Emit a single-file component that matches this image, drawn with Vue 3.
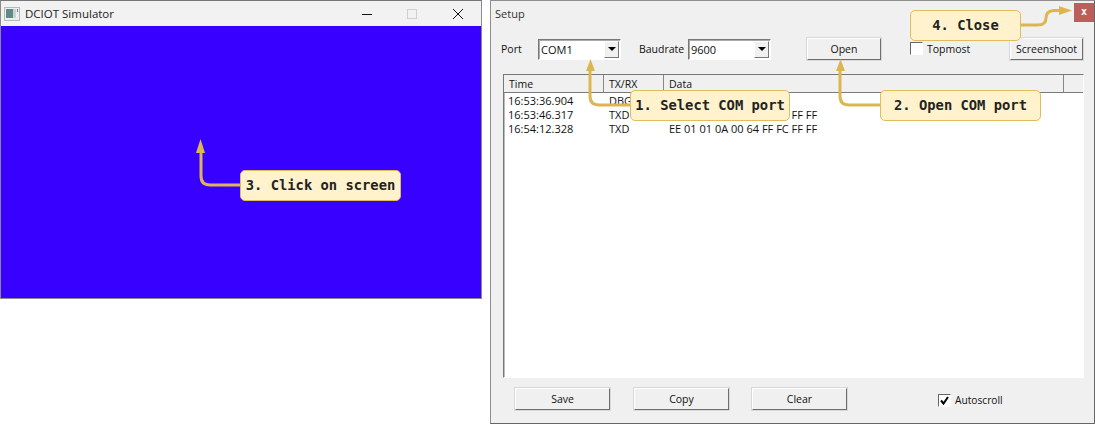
<script setup>
const rows = [
  { t: '16:53:36.904', k: 'DBG', d: '' },
  { t: '16:53:46.317', k: 'TXD', d: 'EE 01 01 0A 00 64 FF FC FF FF' },
  { t: '16:54:12.328', k: 'TXD', d: 'EE 01 01 0A 00 64 FF FC FF FF' }
]
</script>

<template>
  <div class="page">
    <section class="sim">
      <header class="sim-title">
        <svg class="app-icon" width="16" height="14" viewBox="0 0 16 14">
          <rect x="0.5" y="0.5" width="15" height="13" fill="#eef0f0" stroke="#b5b8b8" />
          <rect x="2" y="2" width="7" height="9" fill="#5f8a86" />
          <rect x="9" y="2" width="3" height="9" fill="#c9d3d3" />
          <rect x="13" y="2" width="1" height="3" fill="#6f7f80" />
        </svg>
        <span class="sim-name">DCIOT Simulator</span>
        <svg class="ctl min" width="10" height="10" viewBox="0 0 10 10"><path d="M0 5.5H10" stroke="#111" /></svg>
        <svg class="ctl max" width="10" height="10" viewBox="0 0 10 10"><rect x="0.5" y="0.5" width="9" height="9" fill="none" stroke="#cfcfcf" /></svg>
        <svg class="ctl cls" width="10" height="10" viewBox="0 0 10 10"><path d="M0 0L10 10M10 0L0 10" stroke="#111" /></svg>
      </header>
      <div class="screen"></div>
    </section>

    <section class="setup">
      <header class="setup-title">Setup</header>
      <div class="toolbar">
        <span class="lbl port-lbl">Port</span>
        <div class="combo com"><span>COM1</span><i class="drop"></i></div>
        <span class="lbl baud-lbl">Baudrate</span>
        <div class="combo baud"><span>9600</span><i class="drop"></i></div>
        <button class="btn open">Open</button>
        <label class="check top"><i class="box"></i>Topmost</label>
        <button class="btn shot">Screenshoot</button>
      </div>
      <div class="list">
        <div class="list-head">
          <span class="h h1">Time</span>
          <span class="h h2">TX/RX</span>
          <span class="h h3">Data</span>
          <span class="h h4"></span>
        </div>
        <div class="rows">
          <div v-for="r in rows" :key="r.t" class="row">
            <span class="c1">{{ r.t }}</span><span class="c2">{{ r.k }}</span><span class="c3">{{ r.d }}</span>
          </div>
        </div>
      </div>
      <div class="footer">
        <button class="btn foot">Save</button>
        <button class="btn foot copy">Copy</button>
        <button class="btn foot clear">Clear</button>
        <label class="check auto">
          <i class="box"><svg width="11" height="11" viewBox="0 0 11 11"><path d="M2 5.5L4.5 8.5L9 2" fill="none" stroke="#000" stroke-width="2" /></svg></i>Autoscroll
        </label>
      </div>
      <div class="x">x</div>
    </section>

    <svg class="arrows" width="1095" height="424" viewBox="0 0 1095 424">
      <g fill="none" stroke="#dcb751" stroke-width="3">
        <path d="M590 66V96Q590 105 599 105H640" />
        <path d="M840 66V96Q840 105 849 105H885" />
        <path d="M201 150V176Q201 185 210 185H245" />
        <path d="M1018 25H1038Q1046 25 1046 18Q1046 11 1054 10.5H1064" />
      </g>
      <g fill="#dcb751">
        <path d="M590.500 59L595 71H586Z" />
        <path d="M840.500 59L845 71H836Z" />
        <path d="M200.500 139L205 153H196Z" />
        <path d="M1072 10.500L1059 6V15Z" />
      </g>
    </svg>

    <div class="tag t1">1. Select COM port</div>
    <div class="tag t2">2. Open COM port</div>
    <div class="tag t3">3. Click on screen</div>
    <div class="tag t4">4. Close</div>
  </div>
</template>

<style>
html, body { margin: 0; background: #fff; }
</style>

<style scoped>
.page {
  position: relative;
  width: 1095px;
  height: 424px;
  overflow: hidden;
  background: #fff;
  font-family: "Noto Sans", "Open Sans", sans-serif;
  color: #111;
}
.sim {
  position: absolute;
  left: 0;
  top: 0;
  width: 482px;
  height: 299px;
  box-sizing: border-box;
  border: 1px solid #8a8a8a;
  border-top: 1px solid #777;
  display: flex;
  flex-direction: column;
}
.sim-title {
  height: 25px;
  background: #f2f2f2;
  position: relative;
  display: flex;
  align-items: center;
  flex: none;
}
.app-icon { margin-left: 3px; }
.sim-name { margin-left: 5px; font-family: "Open Sans", sans-serif; font-size: 11.500px; color: #222; }
.ctl { position: absolute; top: 8px; }
.min { left: 361px; }
.max { left: 406px; }
.cls { left: 452px; }
.screen { flex: 1; background: #3700ff; }

.setup {
  position: absolute;
  left: 490px;
  top: 0;
  width: 605px;
  height: 424px;
  box-sizing: border-box;
  background: #f0f0f0;
  border: 1px solid #8f8f8f;
  border-right-color: #666;
  border-bottom-color: #666;
  font-family: "Open Sans", "Noto Sans", sans-serif;
  font-size: 10.500px;
  display: flex;
  flex-direction: column;
}
.setup-title { height: 28px; padding: 5px 0 0 4px; box-sizing: border-box; font-size: 11px; color: #333; }
.toolbar { position: relative; height: 45px; flex: none; }
.lbl { position: absolute; top: 13px; }
.port-lbl { left: 10px; }
.baud-lbl { left: 148px; }
.combo {
  position: absolute;
  top: 10px;
  height: 21px;
  box-sizing: border-box;
  background: #fff;
  border: 1px solid;
  border-color: #777 #fff #fff #777;
  box-shadow: inset 1px 1px 0 #aaa;
  padding: 2px 0 0 2px;
  line-height: 15px;
  font-size: 11px;
}
.com { left: 47px; width: 83px; }
.baud { left: 197px; width: 83px; }
.drop {
  position: absolute;
  right: 1px;
  top: 1px;
  width: 15px;
  height: 17px;
  background: #f0f0f0;
  border: 1px solid;
  border-color: #fff #777 #777 #fff;
  box-sizing: border-box;
}
.drop::after {
  content: "";
  position: absolute;
  left: 3px;
  top: 5px;
  border: 4px solid transparent;
  border-top: 4px solid #000;
  border-bottom: 0;
}
.btn {
  font: inherit;
  color: #111;
  background: #f0f0f0;
  box-sizing: border-box;
  border: 1px solid;
  border-color: #fff #6f6f6f #6f6f6f #fff;
  box-shadow: 0 0 0 1px #d8d8d8;
  padding: 0;
}
.open { position: absolute; left: 316px; top: 9px; width: 74px; height: 22px; }
.shot { position: absolute; left: 519px; top: 9px; width: 73px; height: 22px; }
.check { position: absolute; display: flex; align-items: center; gap: 4px; }
.box {
  width: 11px;
  height: 11px;
  box-sizing: content-box;
  background: #fff;
  border: 1px solid;
  border-color: #666 #fff #fff #666;
  display: block;
  line-height: 0;
}
.top { left: 419px; top: 13px; }
.top .box { margin-bottom: 1px; }
.list {
  margin: 0 10px 0 12px;
  height: 304px;
  flex: none;
  background: #fff;
  border: 1px solid;
  border-color: #777 #fff #fff #777;
  box-shadow: inset 1px 1px 0 #bbb;
  box-sizing: border-box;
  display: flex;
  flex-direction: column;
  font-size: 11px;
}
.list-head { height: 18px; display: flex; flex: none; background: #f0f0f0; border-bottom: 1px solid #7a7a7a; box-sizing: border-box; font-size: 10.500px; }
.h { box-sizing: border-box; border-right: 1px solid #888; padding: 2px 0 0 5px; line-height: 15px; }
.h1 { width: 100px; }
.h2 { width: 60px; }
.h3 { flex: 1; }
.h4 { width: 19px; border: 0; }
.rows { padding-top: 1px; }
.row { display: flex; height: 14px; line-height: 14px; }
.c1 { width: 100px; padding-left: 4px; box-sizing: border-box; }
.c2 { width: 60px; padding-left: 5px; box-sizing: border-box; }
.c3 { padding-left: 5px; }
.footer { position: relative; flex: 1; }
.foot { position: absolute; top: 10px; width: 95px; height: 22px; left: 24px; }
.copy { left: 143px; }
.clear { left: 261px; }
.auto { left: 447px; top: 15px; font-size: 10.200px; }
.x {
  position: absolute;
  left: 583px;
  top: 2px;
  width: 20px;
  height: 19px;
  background: #bc5f5a;
  color: #fff;
  font: 700 10px/18px "DejaVu Sans Mono", monospace;
  text-align: center;
}

.arrows { position: absolute; left: 0; top: 0; pointer-events: none; }
.tag {
  position: absolute;
  box-sizing: border-box;
  background: #fff2cc;
  border: 1px solid #e0bd5c;
  border-radius: 5px;
  color: #222;
  font-family: "DejaVu Sans Mono", "Liberation Mono", monospace;
  font-weight: 700;
  font-size: 13.800px;
  white-space: nowrap;
  display: flex;
  align-items: center;
  justify-content: center;
  padding-bottom: 2px;
}
.t1 { left: 630px; top: 90px; width: 160px; height: 31px; }
.t2 { left: 880px; top: 90px; width: 161px; height: 31px; }
.t3 { left: 240px; top: 170px; width: 161px; height: 31px; }
.t4 { left: 910px; top: 10px; width: 111px; height: 31px; }
</style>
